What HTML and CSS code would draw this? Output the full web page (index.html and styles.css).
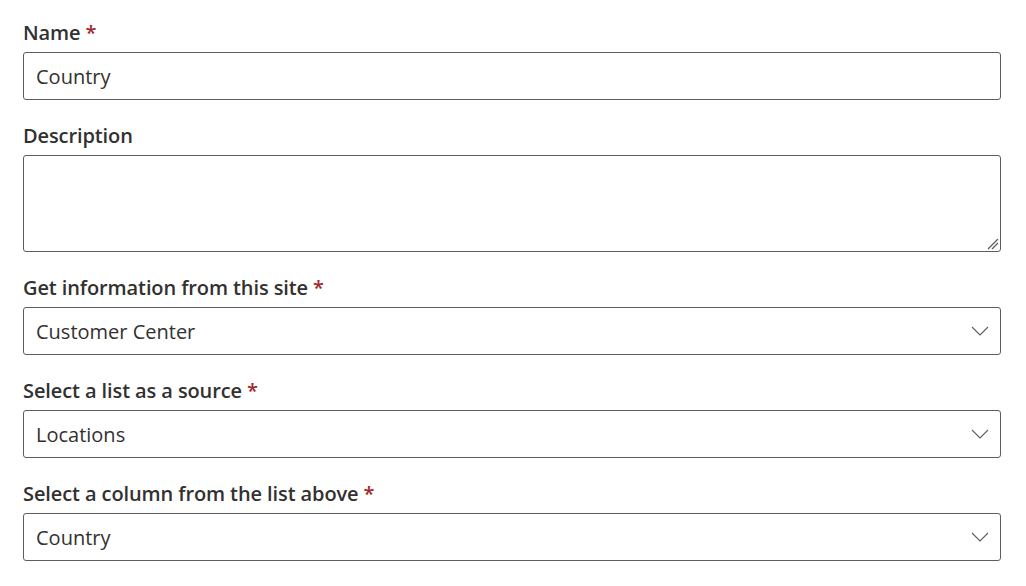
FILE: index.html
```html
<!DOCTYPE html>
<html>
<head>
<meta charset="utf-8">
<link rel="stylesheet" href="styles.css">
</head>
<body>
<form class="form">
  <div class="field">
    <div class="label">Name <span class="req">*</span></div>
    <div class="box"><span class="value">Country</span></div>
  </div>
  <div class="field">
    <div class="label">Description</div>
    <div class="box area">
      <svg class="grip" width="12" height="12" viewBox="0 0 12 12"><path d="M1 11 L11 1 M5 11 L11 5" stroke="#605e5c" stroke-width="1.3" fill="none"/></svg>
    </div>
  </div>
  <div class="field">
    <div class="label">Get information from this site <span class="req">*</span></div>
    <div class="box select"><span class="value">Customer Center</span>
      <svg class="chev" width="18" height="10" viewBox="0 0 18 10"><path d="M1 1 L9 9 L17 1" stroke="#605e5c" stroke-width="1.1" fill="none"/></svg>
    </div>
  </div>
  <div class="field">
    <div class="label">Select a list as a source <span class="req">*</span></div>
    <div class="box select"><span class="value">Locations</span>
      <svg class="chev" width="18" height="10" viewBox="0 0 18 10"><path d="M1 1 L9 9 L17 1" stroke="#605e5c" stroke-width="1.1" fill="none"/></svg>
    </div>
  </div>
  <div class="field">
    <div class="label">Select a column from the list above <span class="req">*</span></div>
    <div class="box select"><span class="value">Country</span>
      <svg class="chev" width="18" height="10" viewBox="0 0 18 10"><path d="M1 1 L9 9 L17 1" stroke="#605e5c" stroke-width="1.1" fill="none"/></svg>
    </div>
  </div>
</form>
</body>
</html>
```
FILE: styles.css
```css
html, body {
  margin: 0;
  padding: 0;
  background: #ffffff;
}
body {
  font-family: "Open Sans", "Noto Sans", sans-serif;
  color: #323130;
}
.form {
  display: flex;
  flex-direction: column;
  gap: 22px;
  padding: 19px 25px 0 23px;
}
.field {
  display: flex;
  flex-direction: column;
}
.label {
  font-size: 20px;
  font-weight: 600;
  line-height: 28px;
  padding-bottom: 5px;
  letter-spacing: -0.1px;
}
.req {
  color: #a4262c;
}
.box {
  box-sizing: border-box;
  height: 48px;
  border: 1px solid #605e5c;
  border-radius: 3px;
  display: flex;
  align-items: center;
  padding: 0 12px;
  position: relative;
}
.value {
  font-size: 20px;
  color: #323130;
}
.area {
  height: 97px;
}
.grip {
  position: absolute;
  right: 1px;
  bottom: 1px;
}
.select {
  justify-content: space-between;
}
.chev {
  margin-right: -1px;
}
```
